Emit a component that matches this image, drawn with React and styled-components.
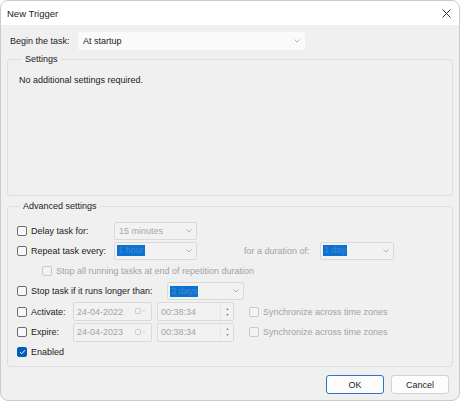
import React from "react";
import styled, { createGlobalStyle } from "styled-components";

const GlobalStyle = createGlobalStyle`
  html, body {
    margin: 0;
    padding: 0;
    background: #ffffff;
  }
  body {
    font-family: "Liberation Sans", Arial, sans-serif;
    font-size: 9px;
    color: #1b1b1b;
  }
  * {
    box-sizing: border-box;
  }
`;

const Window = styled.div`
  width: 460px;
  height: 401px;
  display: flex;
  flex-direction: column;
  border: 1px solid #cbcbcb;
  border-radius: 8px;
  overflow: hidden;
  background: #f0f0f0;
`;

const TitleBar = styled.div`
  height: 24px;
  flex-shrink: 0;
  background: #ffffff;
  display: flex;
  align-items: center;
  justify-content: space-between;
  padding: 0 8px 0 6px;
  font-size: 9.5px;
`;

const Body = styled.div`
  flex: 1;
  padding: 7px 6px 0 6px;
  display: flex;
  flex-direction: column;
`;

const BeginRow = styled.div`
  height: 18px;
  display: flex;
  align-items: center;
`;

const BeginLabel = styled.span`
  width: 71px;
  padding-left: 3px;
`;

const Group = styled.fieldset`
  margin: ${(p) => p.$top}px 0 0 0;
  padding: 0 0 0 ${(p) => p.$indent}px;
  height: ${(p) => p.$height}px;
  border: 1px solid #dedede;
  border-radius: 3px;
  min-width: 0;
`;

const Legend = styled.legend`
  margin-left: 3px;
  padding: 0 3px;
  line-height: 12px;
  font-size: 9px;
`;

const Note = styled.div`
  margin-top: 9px;
  line-height: 12px;
`;

const Rows = styled.div`
  margin-top: 9px;
  display: flex;
  flex-direction: column;
  gap: 1.33px;
`;

const Row = styled.div`
  height: 19px;
  display: flex;
  align-items: center;
  padding-left: ${(p) => p.$indent || 0}px;
`;

const Box = styled.span`
  width: 10px;
  height: 10px;
  flex-shrink: 0;
  margin-right: 4px;
  border-radius: 2px;
  border: 1px solid ${(p) => (p.$checked ? "#005fb8" : p.$disabled ? "#cacaca" : "#6e6e6e")};
  background: ${(p) => (p.$checked ? "#005fb8" : p.$disabled ? "#f3f3f3" : "#f8f8f8")};
  display: flex;
  align-items: center;
  justify-content: center;
  margin-left: ${(p) => p.$left || 0}px;
`;

const Label = styled.span`
  width: ${(p) => (p.$width ? `${p.$width}px` : "auto")};
  flex-shrink: 0;
  white-space: nowrap;
  color: ${(p) => (p.$disabled ? "#a3a3a3" : "#1b1b1b")};
  margin-left: ${(p) => p.$left || 0}px;
`;

const Combo = styled.div`
  width: ${(p) => p.$width}px;
  height: 18px;
  flex-shrink: 0;
  display: flex;
  align-items: center;
  justify-content: space-between;
  padding: 0 4px 0 ${(p) => (p.$selected ? 2 : 4)}px;
  border: 1px solid ${(p) => (p.$disabled ? "#dadada" : "#fafafa")};
  border-radius: 2px;
  background: ${(p) => (p.$disabled ? "#f2f2f2" : "#fafafa")};
  color: ${(p) => (p.$disabled ? "#a6a6a6" : "#1b1b1b")};
  margin-left: ${(p) => p.$left || 0}px;
`;

const Selected = styled.span`
  flex-shrink: 0;
  background: #0a72d2;
  color: #4a86c6;
  height: 11px;
  line-height: 11px;
  padding: 0 1px;
  width: ${(p) => p.$width}px;
  white-space: nowrap;
  overflow: hidden;
`;

const Field = styled.div`
  width: ${(p) => p.$width}px;
  height: 19px;
  flex-shrink: 0;
  display: flex;
  align-items: center;
  justify-content: space-between;
  padding-left: 3px;
  border: 1px solid #dadada;
  border-radius: 2px;
  background: #f2f2f2;
  color: #a3a3a3;
  margin-left: ${(p) => p.$left || 0}px;
`;

const Spinner = styled.div`
  width: 13px;
  height: 100%;
  display: flex;
  flex-direction: column;
  align-items: center;
  justify-content: space-evenly;
  border-left: 1px solid #e8e8e8;
`;

const Footer = styled.div`
  display: flex;
  justify-content: flex-end;
  gap: 7px;
  margin-top: 8px;
  padding-right: 4px;
`;

const Button = styled.button`
  width: 58px;
  height: 19px;
  padding: 0;
  font-family: inherit;
  font-size: 9px;
  color: #1b1b1b;
  background: #fdfdfd;
  border: 1px solid ${(p) => (p.$primary ? "#2b74c6" : "#d2d2d2")};
  border-radius: 3px;
`;

const Chevron = () => (
  <svg width="6" height="4" viewBox="0 0 6 4">
    <polyline points="0.5,0.5 3,3 5.5,0.5" fill="none" stroke="#a0a0a0" strokeWidth="0.8" />
  </svg>
);

const Calendar = () => (
  <svg width="11" height="7" viewBox="0 0 11 7" style={{ marginRight: 5 }}>
    <rect x="0.5" y="0.5" width="5" height="5" rx="1" fill="none" stroke="#c2c2c2" strokeWidth="0.8" />
    <polyline points="7.5,2.5 8.8,3.6 10,2.5" fill="none" stroke="#c2c2c2" strokeWidth="0.7" />
  </svg>
);

const Arrow = ({ up }) => (
  <svg width="3" height="2" viewBox="0 0 4 3">
    <polygon points={up ? "2,0 4,3 0,3" : "0,0 4,0 2,3"} fill="#8a8a8a" />
  </svg>
);

const Check = () => (
  <svg width="7" height="6" viewBox="0 0 7 6">
    <polyline points="1,3 2.8,4.8 6,1" fill="none" stroke="#ffffff" strokeWidth="0.9" />
  </svg>
);

const Close = () => (
  <svg width="9" height="9" viewBox="0 0 9 9">
    <path d="M0.5 0.5 L8.5 8.5 M8.5 0.5 L0.5 8.5" stroke="#1b1b1b" strokeWidth="0.9" />
  </svg>
);

const DateRow = ({ label, date }) => (
  <Row>
    <Box />
    <Label $width={42}>{label}</Label>
    <Field $width={79}>
      {date}
      <Calendar />
    </Field>
    <Field $width={77} $left={5}>
      00:38:34
      <Spinner>
        <Arrow up />
        <Arrow />
      </Spinner>
    </Field>
    <Box $disabled $left={15} />
    <Label $disabled>Synchronize across time zones</Label>
  </Row>
);

export default function App() {
  return (
    <>
      <GlobalStyle />
      <Window>
        <TitleBar>
          <span>New Trigger</span>
          <Close />
        </TitleBar>
        <Body>
          <BeginRow>
            <BeginLabel>Begin the task:</BeginLabel>
            <Combo $width={227}>
              At startup
              <Chevron />
            </Combo>
          </BeginRow>

          <Group $top={3} $height={143} $indent={11}>
            <Legend>Settings</Legend>
            <Note>No additional settings required.</Note>
          </Group>

          <Group $top={4} $height={167} $indent={9}>
            <Legend>Advanced settings</Legend>
            <Rows>
              <Row>
                <Box />
                <Label $width={83}>Delay task for:</Label>
                <Combo $width={83} $disabled>
                  15 minutes
                  <Chevron />
                </Combo>
              </Row>
              <Row>
                <Box />
                <Label $width={83}>Repeat task every:</Label>
                <Combo $width={83} $disabled $selected>
                  <Selected $width={28}>1 hour</Selected>
                  <Chevron />
                </Combo>
                <Label $disabled $left={47} $width={76}>for a duration of:</Label>
                <Combo $width={74} $disabled $selected>
                  <Selected $width={24}>1 day</Selected>
                  <Chevron />
                </Combo>
              </Row>
              <Row $indent={25}>
                <Box $disabled />
                <Label $disabled>Stop all running tasks at end of repetition duration</Label>
              </Row>
              <Row>
                <Box />
                <Label $width={136}>Stop task if it runs longer than:</Label>
                <Combo $width={77} $disabled $selected>
                  <Selected $width={28}>3 days</Selected>
                  <Chevron />
                </Combo>
              </Row>
              <DateRow label="Activate:" date="24-04-2022" />
              <DateRow label="Expire:" date="24-04-2023" />
              <Row>
                <Box $checked>
                  <Check />
                </Box>
                <Label>Enabled</Label>
              </Row>
            </Rows>
          </Group>

          <Footer>
            <Button $primary>OK</Button>
            <Button>Cancel</Button>
          </Footer>
        </Body>
      </Window>
    </>
  );
}
